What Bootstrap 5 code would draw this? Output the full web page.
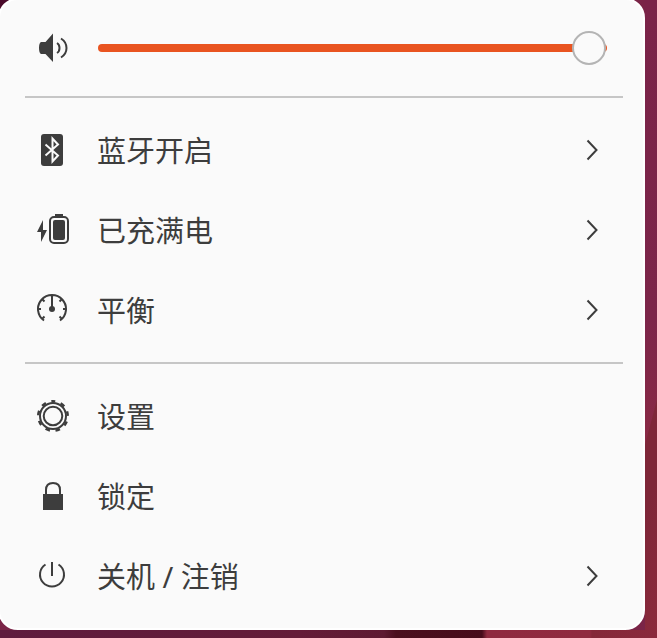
<!DOCTYPE html>
<html lang="zh-CN">
<head>
<meta charset="utf-8">
<meta name="viewport" content="width=device-width, initial-scale=1">
<title>系统菜单</title>
<link rel="stylesheet" href="https://cdn.jsdelivr.net/npm/bootstrap@5.3.0/dist/css/bootstrap.min.css">
<style>
body {
  min-height: 100vh;
  font-family: "Noto Sans", "Noto Sans CJK SC", sans-serif;
  color: #3d3d3d;
  background-color: #7a2447;
  background-image:
    linear-gradient(#4a0a2a, #4a0a2a),
    linear-gradient(90deg, #5f1c3e, #641c38 300px, #5e1a32 384px, #4a0f1e 396px, #470c1b 482px, #8f2a40 487px, #902b40 590px, #842839 592px, #8a293c),
    linear-gradient(105deg, transparent 11px, #7e2638 12px, #7e2638 30px, #8c2a3c 100%),
    linear-gradient(#7a2348, #7c2549 50%, #8a2944 70%);
  background-size: 20px 20px, 100% 8px, 12px 238px, 12px 100%;
  background-position: 0 0, 0 100%, 100% 100%, 100% 0;
  background-repeat: no-repeat;
}
.menu-panel {
  margin: -2px 12px 8px -2px;
  background: #fafafa;
  border: 2px solid #fff;
  border-radius: 20px;
}
.volume-row { height: 96px; padding: 0 36px 0 37px; gap: 29px; }
.menu-line { height: 2px; margin: 0 20px 0 25px; background: #c6c6c6; }
.menu-group { padding: 12px 0; }
.menu-row {
  height: 80px;
  padding: 0 45px 0 37px;
  gap: 28px;
  color: inherit;
  font-size: 29px;
  line-height: 40px;
}
.menu-row:hover { background: #f0f0f0; }
.menu-text { padding-top: 2px; }
.glyph { width: 32px; height: 32px; flex: none; fill: #3d3d3d; }
.stroke { fill: none; stroke: #3d3d3d; stroke-width: 2; }
.arrow { width: 12px; height: 22px; flex: none; }
.volume {
  appearance: none;
  height: 34px;
  min-width: 0;
  margin: 0;
  background: transparent;
}
.volume::-webkit-slider-runnable-track { height: 8px; border-radius: 4px; background: #e95420; }
.volume::-webkit-slider-thumb {
  appearance: none;
  width: 34px;
  height: 34px;
  margin-top: -13px;
  border: 2px solid #b4b4b4;
  border-radius: 50%;
  background: #fafafa;
}
</style>
</head>
<body>
<main class="menu-panel d-flow-root overflow-hidden">
  <div class="volume-row d-flex align-items-center">
    <svg class="glyph" viewBox="0 0 32 32" aria-hidden="true">
      <path d="M4 10h4.500l7.500-8.500v28.500l-7.500-8H4q-2-1-2-6t2-6z"/>
      <path class="stroke" d="M20 11q2.500 1.500 2.500 5t-2.500 5M24 6.500q5.500 3.500 5.500 9.500t-5.500 9.500"/>
    </svg>
    <input class="volume flex-grow-1" type="range" min="0" max="500" value="499" aria-label="音量">
  </div>
  <div class="menu-line"></div>
  <div class="menu-group">
    <button class="menu-row btn rounded-0 border-0 w-100 d-flex align-items-center text-start" type="button">
      <svg class="glyph" viewBox="0 0 32 32" aria-hidden="true">
        <rect x="4" width="22" height="32" rx="3"/>
        <path d="M8.500 10.500l12.500 11-5.500 6V4.500l5.500 6-12.500 11" fill="none" stroke="#fafafa" stroke-width="2"/>
      </svg>
      <span class="menu-text flex-grow-1">蓝牙开启</span>
      <svg class="arrow stroke" viewBox="0 0 12 22" aria-hidden="true"><path d="M1.500 1.500l9 9.500-9 9.500"/></svg>
    </button>
    <button class="menu-row btn rounded-0 border-0 w-100 d-flex align-items-center text-start" type="button">
      <svg class="glyph" viewBox="0 0 32 32" aria-hidden="true">
        <path d="M6 6L0 18h4v10l6-12H6zM18 0h8v3h-8z"/>
        <rect class="stroke" x="13" y="3" width="18" height="26" rx="4"/>
        <rect x="16" y="6" width="12" height="20" rx="2"/>
      </svg>
      <span class="menu-text flex-grow-1">已充满电</span>
      <svg class="arrow stroke" viewBox="0 0 12 22" aria-hidden="true"><path d="M1.500 1.500l9 9.500-9 9.500"/></svg>
    </button>
    <button class="menu-row btn rounded-0 border-0 w-100 d-flex align-items-center text-start" type="button">
      <svg class="glyph" viewBox="0 0 32 32" aria-hidden="true">
        <path class="stroke" d="M7 26.500a14 14 0 1 1 16 0M15 1v14M1 15h3M26 15h3M5 5l2.500 2.500M25 5l-2.500 2.500M5 25l2.500-2.500M25 25l-2.500-2.500"/>
        <circle cx="15" cy="15" r="3"/>
      </svg>
      <span class="menu-text flex-grow-1">平衡</span>
      <svg class="arrow stroke" viewBox="0 0 12 22" aria-hidden="true"><path d="M1.500 1.500l9 9.500-9 9.500"/></svg>
    </button>
  </div>
  <div class="menu-line"></div>
  <div class="menu-group">
    <button class="menu-row btn rounded-0 border-0 w-100 d-flex align-items-center text-start" type="button">
      <svg class="glyph" viewBox="0 0 32 32" aria-hidden="true">
        <circle cx="16" cy="16" r="14.800" fill="none" stroke="#3d3d3d" stroke-width="2.400" stroke-dasharray="4.600 5.732" stroke-dashoffset="2.300" transform="rotate(-90 16 16)"/>
        <circle class="stroke" cx="16" cy="16" r="13"/>
        <circle class="stroke" cx="16" cy="16" r="9.300"/>
      </svg>
      <span class="menu-text flex-grow-1">设置</span>
    </button>
    <button class="menu-row btn rounded-0 border-0 w-100 d-flex align-items-center text-start" type="button">
      <svg class="glyph" viewBox="0 0 32 32" aria-hidden="true">
        <path d="M6 14h20v16H6z"/>
        <path class="stroke" d="M9 15v-5q0-7 7-7t7 7v5"/>
      </svg>
      <span class="menu-text flex-grow-1">锁定</span>
    </button>
    <button class="menu-row btn rounded-0 border-0 w-100 d-flex align-items-center text-start" type="button">
      <svg class="glyph" viewBox="0 0 32 32" aria-hidden="true">
        <path class="stroke" d="M15 2v14M8.500 4.500a12 12 0 1 0 13 0"/>
      </svg>
      <span class="menu-text flex-grow-1">关机 / 注销</span>
      <svg class="arrow stroke" viewBox="0 0 12 22" aria-hidden="true"><path d="M1.500 1.500l9 9.500-9 9.500"/></svg>
    </button>
  </div>
</main>
<script src="https://cdn.jsdelivr.net/npm/bootstrap@5.3.0/dist/js/bootstrap.bundle.min.js"></script>
</body>
</html>
